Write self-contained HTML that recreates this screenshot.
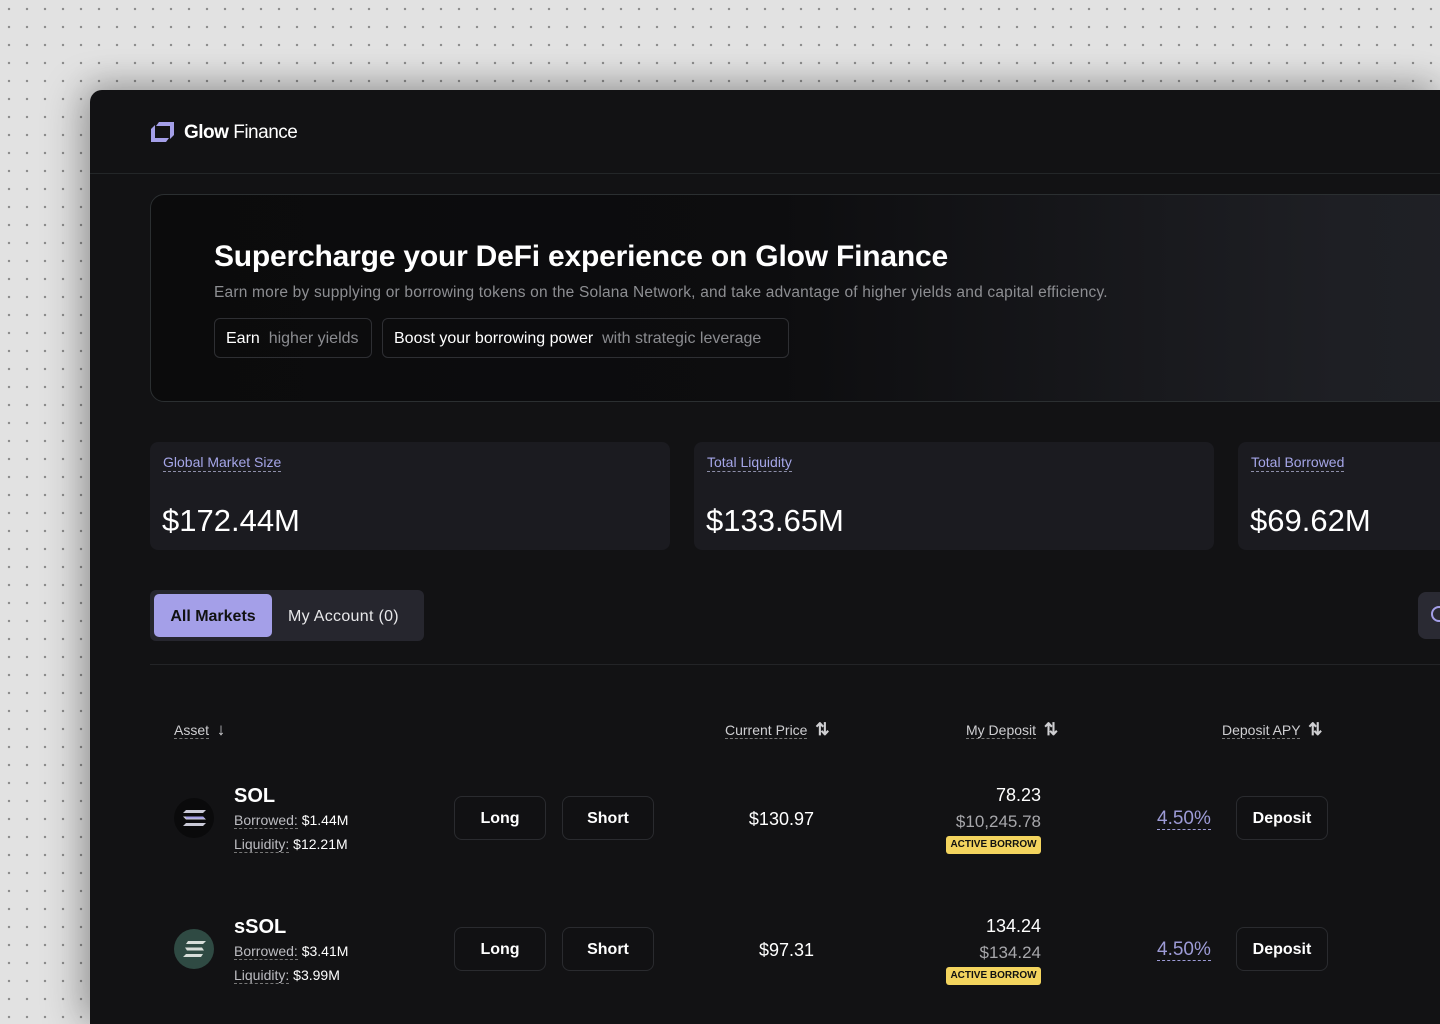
<!DOCTYPE html>
<html><head><meta charset="utf-8"><style>
*{margin:0;padding:0;box-sizing:border-box}
html,body{width:1440px;height:1024px;overflow:hidden}
body{position:relative;font-family:"Liberation Sans",sans-serif;background-color:#e2e2e2;background-image:radial-gradient(circle,#8a8a8a 1px,transparent 1.4px);background-size:18px 18px;background-position:0 0}
.panel{position:absolute;left:90px;top:90px;width:1350px;height:934px;background:#121214;border-top-left-radius:12px;box-shadow:-10px 0 40px rgba(0,0,0,.25),0 -8px 30px rgba(0,0,0,.15);overflow:hidden;color:#fff}
.abs{position:absolute}
.hdr{position:absolute;left:0;top:83px;width:100%;height:1px;background:#232628}
.hero{position:absolute;left:60px;top:104px;width:1400px;height:208px;border:1px solid #2b2f31;border-radius:14px;background:linear-gradient(90deg,#0b0b0c 0%,#0d0d0f 45%,#1e1f24 85%,#202127 100%)}
.pill{position:absolute;top:228px;height:40px;border:1px solid #2e2f33;border-radius:6px;font-size:16px;line-height:40px;padding:0 11px;color:#fff}
.pill span{color:#8b8c90}
.card{position:absolute;top:352px;width:520px;height:108px;background:#1b1b20;border-radius:8px}
.card .l{position:absolute;left:13px;top:12px;font-size:14px;color:#a5a6e8;border-bottom:1px dashed #8d8ea8;line-height:17px}
.card .v{position:absolute;left:12px;top:61px;font-size:31px;color:#fff}
.u{border-bottom:1px dashed #777;}
.th{position:absolute;top:631px;font-size:14px;color:#cfcfd2;line-height:17px}
.btn{position:absolute;width:92px;height:44px;border:1px solid #2a2b2f;border-radius:8px;font-size:16px;font-weight:bold;text-align:center;line-height:44px;background:#111113}
.badge{position:absolute;background:#f3d45e;color:#111;font-size:10px;font-weight:bold;height:18px;line-height:18px;width:95px;text-align:center;border-radius:3px}
.sub{font-size:14px;color:#bdbdc2;position:absolute;line-height:17px}
.sub b{font-weight:normal;color:#fff}
</style></head><body>
<div class="panel">
 <svg class="abs" style="left:61px;top:32px" width="23" height="20" viewBox="0 0 23 20"><path d="M8 0H23V13L19 17V4H5Z M0 7L4 3V16H18L15 20H0Z" fill="#a49fe8"/></svg>
 <div class="abs" style="left:94px;top:32px;font-size:19px;letter-spacing:-.5px"><b style="font-weight:bold">Glow</b> Finance</div>
 <div class="hdr"></div>
 <div class="hero"></div>
 <div class="abs" style="left:124px;top:150px;font-size:30px;font-weight:bold;letter-spacing:-.2px">Supercharge your DeFi experience on Glow Finance</div>
 <div class="abs" style="left:124px;top:194px;font-size:15.5px;color:#8d8e92;letter-spacing:.2px">Earn more by supplying or borrowing tokens on the Solana Network, and take advantage of higher yields and capital efficiency.</div>
 <div class="pill" style="left:124px;width:158px">Earn &nbsp;<span>higher yields</span></div>
 <div class="pill" style="left:292px;width:407px">Boost your borrowing power &nbsp;<span>with strategic leverage</span></div>
 <div class="card" style="left:60px"><div class="l">Global Market Size</div><div class="v">$172.44M</div></div>
 <div class="card" style="left:604px"><div class="l">Total Liquidity</div><div class="v">$133.65M</div></div>
 <div class="card" style="left:1148px"><div class="l">Total Borrowed</div><div class="v">$69.62M</div></div>
 <div class="abs" style="left:60px;top:500px;width:274px;height:51px;background:#26262e;border-radius:6px"></div>
 <div class="abs" style="left:64px;top:504px;width:118px;height:43px;background:#a49fe8;border-radius:5px;color:#111;font-weight:bold;font-size:16px;text-align:center;line-height:45px">All Markets</div>
 <div class="abs" style="left:198px;top:505px;font-size:16px;line-height:43px;color:#e8e8ea;letter-spacing:.3px">My Account (0)</div>
 <div class="abs" style="left:1328px;top:502px;width:60px;height:47px;background:#2a2a33;border-radius:8px"></div>
 <div class="abs" style="left:1341px;top:516px;width:16px;height:16px;border:2px solid #a49fe8;border-radius:50%"></div>
 <div class="abs" style="left:60px;top:574px;width:1400px;height:1px;background:#232427"></div>
 <div class="th" style="left:84px"><span class="u">Asset</span> &nbsp;<span style="font-size:17px;font-weight:bold">↓</span></div>
 <div class="th" style="left:635px"><span class="u">Current Price</span> &nbsp;<span style="font-size:17px;font-weight:bold">⇅</span></div>
 <div class="th" style="left:876px"><span class="u">My Deposit</span> &nbsp;<span style="font-size:17px;font-weight:bold">⇅</span></div>
 <div class="th" style="left:1132px"><span class="u">Deposit APY</span> &nbsp;<span style="font-size:17px;font-weight:bold">⇅</span></div>

 <div class="abs" style="left:84px;top:708px;width:40px;height:40px;border-radius:50%;background:#0a0a0b"></div>
 <svg class="abs" style="left:93px;top:720px" width="23" height="16" viewBox="0 0 23 16"><path d="M3 0H23L20 3H0Z M0 6.5H20L23 9.5H3Z M3 13H23L20 16H0Z" fill="#c9c9d6"/><path d="M3 6.5H20L22 8.5H3Z" fill="#a49fe8"/></svg>
 <div class="abs" style="left:144px;top:695px;font-size:20px;font-weight:bold">SOL</div>
 <div class="sub" style="left:144px;top:722px"><span class="u">Borrowed:</span> <b>$1.44M</b></div>
 <div class="sub" style="left:144px;top:746px"><span class="u">Liquidity:</span> <b>$12.21M</b></div>
 <div class="btn" style="left:364px;top:706px">Long</div>
 <div class="btn" style="left:472px;top:706px">Short</div>
 <div class="abs" style="left:600px;width:124px;text-align:right;top:719px;font-size:18px">$130.97</div>
 <div class="abs" style="left:800px;width:151px;text-align:right;top:695px;font-size:18px">78.23</div>
 <div class="abs" style="left:800px;width:151px;text-align:right;top:722px;font-size:17px;color:#a7a7ab">$10,245.78</div>
 <div class="badge" style="left:856px;top:746px">ACTIVE BORROW</div>
 <div class="abs" style="left:1067px;top:718px;font-size:19px;color:#9d9bd6;border-bottom:1px dashed #9d9bd6;line-height:21px">4.50%</div>
 <div class="btn" style="left:1146px;top:706px">Deposit</div>

 <div class="abs" style="left:84px;top:839px;width:40px;height:40px;border-radius:50%;background:#2f4a43"></div>
 <svg class="abs" style="left:93px;top:851px" width="23" height="16" viewBox="0 0 23 16"><path d="M5 0H23L20 3H3Z M2 6.5H19L21 9.5H4Z M3 13H20L18 16H0Z" fill="#d8ddd9"/></svg>
 <div class="abs" style="left:144px;top:826px;font-size:20px;font-weight:bold">sSOL</div>
 <div class="sub" style="left:144px;top:853px"><span class="u">Borrowed:</span> <b>$3.41M</b></div>
 <div class="sub" style="left:144px;top:877px"><span class="u">Liquidity:</span> <b>$3.99M</b></div>
 <div class="btn" style="left:364px;top:837px">Long</div>
 <div class="btn" style="left:472px;top:837px">Short</div>
 <div class="abs" style="left:600px;width:124px;text-align:right;top:850px;font-size:18px">$97.31</div>
 <div class="abs" style="left:800px;width:151px;text-align:right;top:826px;font-size:18px">134.24</div>
 <div class="abs" style="left:800px;width:151px;text-align:right;top:853px;font-size:17px;color:#a7a7ab">$134.24</div>
 <div class="badge" style="left:856px;top:877px">ACTIVE BORROW</div>
 <div class="abs" style="left:1067px;top:849px;font-size:19px;color:#9d9bd6;border-bottom:1px dashed #9d9bd6;line-height:21px">4.50%</div>
 <div class="btn" style="left:1146px;top:837px">Deposit</div>
</div>
</body></html>
